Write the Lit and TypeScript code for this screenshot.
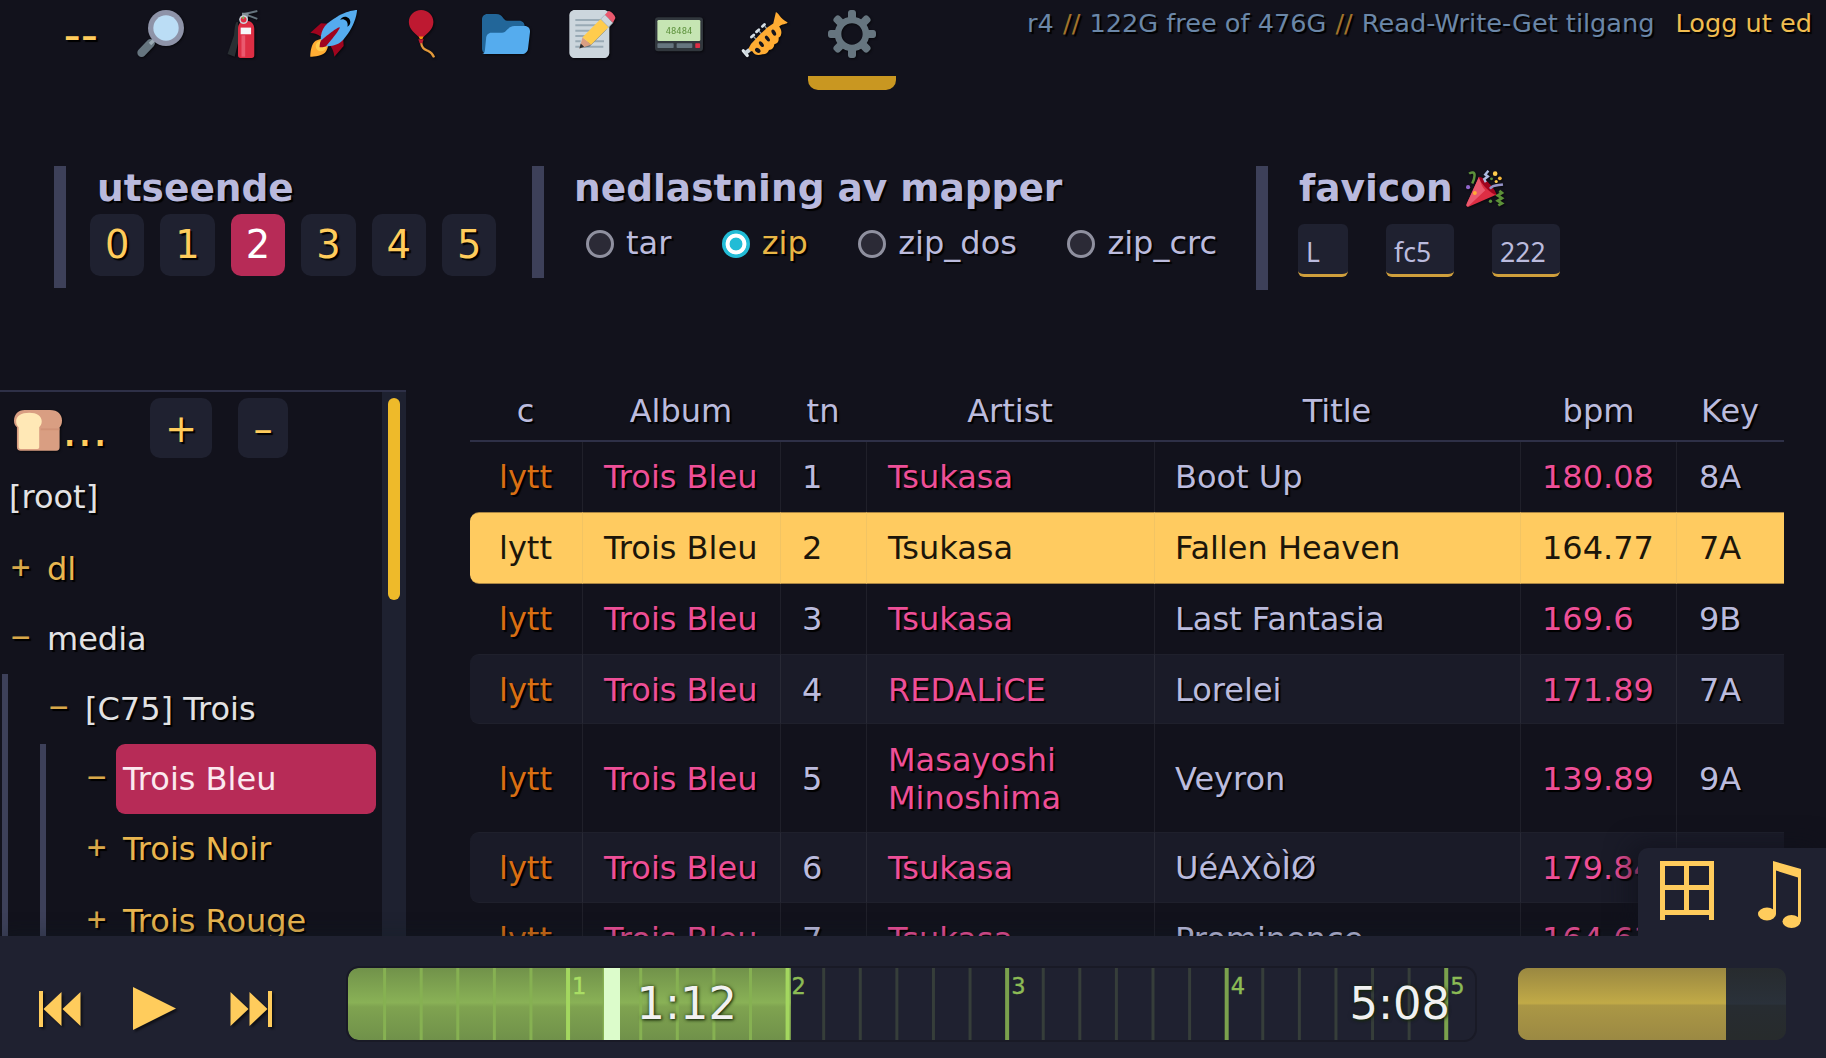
import { LitElement, html, css, svg } from "lit";
import { customElement } from "lit/decorators.js";
import { classMap } from "lit/directives/class-map.js";

const glass = svg`
  <path d="M4.2 32 11 25" stroke="#66757f" stroke-width="6.4" stroke-linecap="round"/>
  <path d="M10.5 25.500 14.500 21.500" stroke="#9aaab4" stroke-width="2.600"/>
  <circle cx="22.500" cy="13.500" r="13.500" fill="#8e93a8"/>
  <circle cx="22.500" cy="13.500" r="9.500" fill="#bbddf5"/>`;

const extinguisher = svg`
  <path d="M11 9c-1.500 2-1.500 6-2 10l-4.800 14 5.300 2 2.500-10V9z" fill="#292f33"/>
  <path d="M12 34V14c0-3.500 2-6 6-6s6.200 2.500 6.200 6v20c0 1.300-.7 2-2 2h-8.200c-1.300 0-2-.7-2-2z" fill="#dd2e44"/>
  <path d="M14.600 19h2.800v16h-2.800z" fill="#ea596e"/>
  <path d="M14 13.200h7.800v5H14z" fill="#f5f8fa"/>
  <path d="M15.500 3.400 26.500.8M18 3.500l8.500 3.200" stroke="#66757f" stroke-width="1.500" fill="none"/>
  <path d="M15 2h5l-1 6h-4z" fill="#808c95"/>
  <circle cx="16.200" cy="7.200" r="3.300" fill="#ccd6dd"/>
  <circle cx="16.200" cy="7.200" r="2.200" fill="#dd2e44"/>
  <circle cx="16" cy="5.800" r=".9" fill="#77b255"/>`;

const rocket = svg`
  <path fill="#a0041e" d="M1 17l8-7 16 1 1 16-7 8s.001-5.999-6-12-12-6-12-6z"/>
  <path fill="#ffac33" d="M.973 35s-.036-7.979 2.985-11S15 21.187 15 21.187 14.999 29 11.999 32c-3 3-11.026 3-11.026 3z"/>
  <circle fill="#ffcc4d" cx="9" cy="27" r="4"/>
  <path fill="#55acee" d="M35.999 0s-10 0-22 10c-6 5-6 14-4 16s11 2 16-4c10-12 10-22 10-22z"/>
  <path fill="#000" d="M26.999 5c-1.623 0-3.013.971-3.641 2.360.502-.227 1.055-.360 1.641-.360 2.209 0 4 1.791 4 4 0 .586-.133 1.139-.359 1.640 1.389-.627 2.359-2.017 2.359-3.640 0-2.209-1.791-4-4-4z"/>
  <path fill="#a0041e" d="M8 28s0-4 1-5 13.001-10.999 14-10-9.001 13-10.001 14S8 28 8 28z"/>`;

const balloon = svg`
  <path d="M19.500 24c.5 5 3 5.500 5.500 6.800 2.500 1.200 3.500 2.700 4.300 4.700" fill="none" stroke="#e39a3b" stroke-width="1.700"/>
  <path d="M17.500 22h4l-1 3h-2z" fill="#be1931"/>
  <path d="M28.800 9c0 5.500-4.500 8.500-8.300 12h-1.800C15 17.500 10.400 14.500 10.400 9c0-5 4.100-9 9.200-9s9.200 4 9.200 9z" fill="#be1931"/>
  <path d="M17.800 19.800h3.600l-.8 2h-2z" fill="#f4900c"/>`;

const folder = svg`
  <path fill="#226699" d="M0 29c0 2.209 1.791 4 4 4h24c2.209 0 4-1.791 4-4V12c0-2.209-1.791-4-4-4h-9c-3.562 0-3-5-8.438-5H4C1.791 3 0 4.791 0 7v22z"/>
  <path fill="#55acee" d="M32 12h-7.500c-5.400 0-5.900 5-9.500 5H7c-2.200 0-3.700 1.800-3.900 4l-.9 9c-.2 2-.8 3-2.200 3h30c2.400 0 4.100-1.600 4.500-4L36 16.500c.2-2.500-1.300-4.500-4-4.500z"/>`;

const memo = svg`
  <path fill="#ccd6dd" d="M31 32c0 2.209-1.791 4-4 4H5c-2.209 0-4-1.791-4-4V4c0-2.209 1.791-4 4-4h22c2.209 0 4 1.791 4 4v28z"/>
  <path d="M5.500 7.500h21M5.500 11.500h16M5.500 15.500h14M5.500 19.500h8M5.500 23.500h4M14 23.500h13M5.500 27.500h21" stroke="#99aab5" stroke-width="1.500"/>
  <path d="M31 13 34 9.500 16 27.500 9 28.500z" fill="#66757f"/>
  <path d="m8.600 28.800 2.300-8.300 6.500 5.500z" fill="#d99e82"/>
  <path d="m8.600 28.800.9-3.600 2.600 2.300z" fill="#292f33"/>
  <path d="M10.900 20.500 24.500 6.800l6 6L17.300 26z" fill="#ffcc4d"/>
  <path d="m24.500 6.800 3.200-3.200 6 6-3.200 3.200z" fill="#ccd6dd" stroke="#99aab5" stroke-width=".5"/>
  <path d="m27.700 3.600 2.400-2.700c1.200-1.200 6.300 3.900 5.300 5.500l-1.700 3.200z" fill="#ea596e"/>`;

const pager = svg`
  <rect x="0" y="5.500" width="36" height="25.500" rx="2.500" fill="#31373d"/>
  <rect x="1.800" y="7.500" width="32.200" height="15.800" rx="1" fill="#c6e5b3"/>
  <text x="18" y="17.700" text-anchor="middle" font-family="DejaVu Sans Mono" font-size="6.600" fill="#5c913b">48484</text>
  <rect x="1.800" y="25" width="12.200" height="3.500" rx=".5" fill="#66757f"/>
  <rect x="16.200" y="25" width="11.800" height="3.500" rx=".5" fill="#66757f"/>
  <rect x="30.200" y="25" width="3.600" height="3.500" rx=".5" fill="#dd2e44"/>`;

const trumpet = svg`
  <path d="m7.800 20.300 1.800-1.600M11.600 16.400l1.800-1.600M16 12.300l1.600-1.500" stroke="#d5dee4" stroke-width="2.100" stroke-linecap="round"/>
  <path d="m9.500 20 3 3M13.500 16l3 3M17.800 12.200l2.500 3" stroke="#8c99a3" stroke-width="1"/>
  <path d="M4.600 30.800 7.500 25.500 14 18.500 20 13l4.200-2.800L26.200 1.500c1.500.6 2.400 2.500 4 4.300s3.300 2.600 4.800 3.600c-.5 1.200-4.500 1.100-6.400 3 1.500 2 2.200 4 1.300 6.500-.2 1.300-1.700 1.800-1.700 1.800.4 3-.7 4.600-3.200 5-.2 2.600-1.500 4.200-4 4.300-1 2.300-2.500 3.300-4.800 3.200-3.400 1.200-6 .8-7.700-2.200z" fill="#ffac33"/>
  <g fill="#15151d">
    <ellipse cx="12.600" cy="30.300" rx="1.600" ry="2.300" transform="rotate(-50 12.600 30.300)"/>
    <ellipse cx="15.300" cy="25.600" rx="1.300" ry="2.500" transform="rotate(-38 15.300 25.600)"/>
    <ellipse cx="19.800" cy="21.400" rx="1.300" ry="2.500" transform="rotate(-38 19.800 21.400)"/>
    <ellipse cx="24.600" cy="17" rx="1.400" ry="2.500" transform="rotate(-30 24.600 17)"/>
  </g>
  <path d="m1.700 30.500 3 3.600" stroke="#e1e8ed" stroke-width="2.400" stroke-linecap="round"/>
  <path d="m3 32.500 3.400-2.600" stroke="#ccd6dd" stroke-width="3"/>`;

const gear = svg`
  <path fill="#66757f" d="M34 15h-3.362c-.324-1.369-.864-2.651-1.582-3.814l2.379-2.379c.781-.781.781-2.048 0-2.829l-1.414-1.414c-.781-.781-2.047-.781-2.828 0l-2.379 2.379C23.650 6.225 22.369 5.686 21 5.362V2c0-1.104-.896-2-2-2h-2c-1.104 0-2 .896-2 2v3.362c-1.369.324-2.651.864-3.814 1.582L8.808 4.565c-.781-.781-2.048-.781-2.828 0L4.565 5.979c-.781.781-.781 2.048-.001 2.829l2.379 2.379C6.225 12.350 5.686 13.632 5.362 15H2c-1.104 0-2 .896-2 2v2c0 1.104.896 2 2 2h3.362c.324 1.368.864 2.650 1.582 3.813l-2.379 2.379c-.780.780-.780 2.048.001 2.829l1.414 1.414c.780.780 2.047.780 2.828 0l2.379-2.379c1.163.719 2.445 1.258 3.814 1.582V34c0 1.104.896 2 2 2h2c1.104 0 2-.896 2-2v-3.362c1.368-.324 2.650-.864 3.813-1.582l2.379 2.379c.781.781 2.047.781 2.828 0l1.414-1.414c.781-.781.781-2.048 0-2.829l-2.379-2.379c.719-1.163 1.258-2.445 1.582-3.814H34c1.104 0 2-.896 2-2v-2C36 15.896 35.104 15 34 15zM18 26c-4.418 0-8-3.582-8-8s3.582-8 8-8 8 3.582 8 8-3.582 8-8 8z"/>`;

const bread = svg`
  <path d="M8 3h19c6 0 9 3.500 9 8 0 2.500-.8 3.800-1.800 5v15c0 1.700-.8 2.500-2.500 2.500H5c-1.800 0-2.800-.8-2.800-2.500V16C.8 14.500 0 13.500 0 11c0-4.500 3-8 8-8z" fill="#d99e82"/>
  <path d="M20 16.800h14.200v1.400H20z" fill="#c98a70" opacity=".6"/>
  <path d="M11.500 5c5.500 0 9.300 2.300 9.300 6.500 0 2.200-.8 3.300-1.900 4.500v14.800c0 .9-.4 1.400-1.300 1.400H4.900c-.9 0-1.400-.5-1.400-1.400V16C2.300 14.800 1.600 13.500 1.600 11.500 1.600 7.300 5.500 5 11.500 5z" fill="#ffe8b6"/>`;

const popper = svg`
  <path d="M12.500 6.500 29.500 23.500 3 35c-2 .8-3-.3-2.400-2.400z" fill="#dd2e44"/>
  <path d="M12.500 6.500c1.500 6 3 10 6 13L2 35c-1.300.3-2-.9-1.400-2.400z" fill="#ea596e"/>
  <path d="M12.500 7c3-2 16 11 16.500 16.500-2.500 1.500-15.500-10-16.500-16.500z" fill="#a0041e"/>
  <path d="M3 3.500c2.500-2 5.500-1.500 5.200 2C8 9 7.500 10 6 13" stroke="#5c913b" stroke-width="2.400" fill="none"/>
  <path d="M21.500.8l-3 3.500 2.500 2-3.500 2.500 1.500 3" stroke="#aebbe0" stroke-width="2.300" fill="none"/>
  <path d="M23 18c3-4 7-3 12.500-4" stroke="#9593c8" stroke-width="2.400" fill="none"/>
  <path d="M32 20l2.500 2-4 2.500 4 2.500-4 2.500 4 2.500-3.500 2" stroke="#5c9138" stroke-width="2.600" fill="none"/>
  <circle cx="28" cy="3.500" r="2.200" fill="#ffcc4d"/><circle cx="32.500" cy="8" r="1.800" fill="#f4b73c"/>
  <circle cx="29" cy="11" r="1.500" fill="#ffcc4d"/><circle cx="24.500" cy="8.500" r="1.400" fill="#5c913b"/>
  <circle cx="2" cy="16.500" r="2" fill="#9266cc"/><circle cx="8.500" cy="22" r="1.900" fill="#ffac33"/>
  <circle cx="23.500" cy="30" r="1.600" fill="#5c913b"/>`;

const icon = (art: unknown, cls = "") =>
  html`<svg class="emoji ${cls}" viewBox="0 0 36 36" fill="none" aria-hidden="true">${art}</svg>`;

const tabs = [glass, extinguisher, rocket, balloon, folder, memo, pager, trumpet, gear];

const rows = [
  ["lytt", "Trois Bleu", "1", "Tsukasa", "Boot Up", "180.08", "8A"],
  ["lytt", "Trois Bleu", "2", "Tsukasa", "Fallen Heaven", "164.77", "7A"],
  ["lytt", "Trois Bleu", "3", "Tsukasa", "Last Fantasia", "169.6", "9B"],
  ["lytt", "Trois Bleu", "4", "REDALiCE", "Lorelei", "171.89", "7A"],
  ["lytt", "Trois Bleu", "5", "Masayoshi Minoshima", "Veyron", "139.89", "9A"],
  ["lytt", "Trois Bleu", "6", "Tsukasa", "UéAXòÌØ", "179.84", "7A"],
  ["lytt", "Trois Bleu", "7", "Tsukasa", "Prominence", "164.63", "8A"],
];

const WIDTH = 1127;
const MINUTE = WIDTH / (308 / 60);

@customElement("app-root")
export class AppRoot extends LitElement {
  static styles = css`
    :host {
      display: block;
      --bg: #12121c;
      --raised: #1f2130;
      --fg: #bbbbdd;
      --accent: #ffcc5c;
      --line: #2e3047;
      --bar: #3d4059;
      --pink: #b72b57;
    }
    *, *::before, *::after { box-sizing: border-box; }
    .page {
      position: relative;
      display: flex;
      flex-direction: column;
      width: 1826px;
      height: 1058px;
      overflow: hidden;
      background: var(--bg);
      color: var(--fg);
      font: 32px/37px "DejaVu Sans", sans-serif;
      text-shadow: 2px 2px 1px #000;
    }
    .emoji { width: 48px; height: 48px; display: block; flex: none; filter: drop-shadow(1.5px 1.5px 1px #0009); overflow: visible; }
    .emoji text { text-shadow: none; }

    .top { display: flex; justify-content: space-between; height: 166px; flex: none; padding-right: 14px; }
    .tabs { display: flex; padding-left: 43px; }
    .tab { width: 86.5px; height: 90px; padding-top: 10px; display: flex; justify-content: center; position: relative; color: var(--accent); }
    .tab.text { width: 73.7px; padding: 6px 0 0 2px; font-size: 48px; line-height: 56px; }
    .tab.on::after { content: ""; position: absolute; left: -1px; right: -1px; bottom: 0; height: 14px; background: #c99721; border-radius: 0 0 10px 10px; }
    .info { display: flex; gap: 21px; font-size: 25.6px; line-height: 30px; padding-top: 8px; color: #6b87a8; white-space: pre; }
    .info i { font-style: normal; color: #a2742a; padding: 0 1px; }
    .info b { font-weight: 400; color: #f0bd50; }

    .settings { display: flex; align-items: flex-start; height: 224px; flex: none; padding-left: 54px; }
    .panel { border-left: 12px solid var(--bar); }
    .panel h3 { margin: 0; display: flex; align-items: center; font-size: 37.5px; line-height: 45px; height: 45px; color: #b9b9dd; white-space: nowrap; }
    .looks { width: 478px; height: 122px; padding-left: 24px; }
    .looks h3 { padding-left: 7px; }
    .zips { width: 724px; height: 112px; padding-left: 30px; }
    .favicon { height: 124px; padding-left: 30px; }
    .favicon h3 { padding-left: 1px; }
    .btns { display: flex; gap: 16px; padding-top: 3px; }
    .btn { width: 54.4px; height: 62px; border-radius: 10px; background: var(--raised); color: var(--accent); font-size: 38.4px; line-height: 62px; text-align: center; }
    .btn.on { background: var(--pink); color: #fff; text-shadow: none; }
    .radios { display: flex; padding: 14px 0 0 12px; }
    .radio { display: flex; align-items: center; gap: 12px; height: 37px; margin-right: 50.500px; }
    .radio::before { content: ""; width: 28px; height: 28px; border-radius: 50%; background: #2b2a36; border: 3px solid #8f909f; }
    .radio.on { color: #e9b646; }
    .radio.on::before { background: radial-gradient(circle, #22bcd6 0 6px, #fff 6.800px 10px, #22bcd6 10.800px); border: 0; }
    .emoji.small { width: 37.5px; height: 37.5px; margin-left: 13.5px; }
    .inputs { display: flex; gap: 38px; padding-top: 13px; text-shadow: none; }
    .input { width: 68px; height: 53px; padding: 5px 0 0 8px; background: var(--raised); border-bottom: 3px solid #cf9f3c; border-radius: 6px; font: 26.600px/46px "Noto Sans", sans-serif; }
    .input.short { width: 50px; }

    .main { display: flex; flex: 1; min-height: 0; }
    .tree { width: 406px; flex: none; display: flex; overflow: hidden; border-top: 2px solid var(--line); }
    .nodes { flex: 1; color: #e9b650; min-width: 0; }
    .crumbs { display: flex; height: 70px; padding: 6px 0 0 14px; color: var(--accent); }
    .crumbs .emoji { margin-top: 8px; }
    .dots { width: 88px; font-size: 48px; line-height: 62px; }
    .crumbs .btn { width: 62px; height: 60px; line-height: 62px; margin-right: 26px; }
    .crumbs .btn.narrow { width: 50px; }
    .node { display: flex; height: 70px; line-height: 71px; padding-left: 11px; white-space: nowrap; }
    .node.root { padding-left: 9px; margin-bottom: 2px; }
    .node.low { height: 72px; line-height: 74px; }
    .mark { width: 30px; line-height: 67px; font-family: "DejaVu Sans Mono", monospace; color: #d9a84a; }
    .low .mark { line-height: 70px; }
    .name { flex: 1; padding-left: 6px; }
    .open { color: #e2e2e4; }
    .name.here { background: var(--pink); border-radius: 9px; color: #fbe9ef; text-shadow: none; margin-right: 6px; }
    .kids { border-left: 6px solid var(--bar); margin-left: 2px; }
    .kids .node { padding-left: 41px; }
    .kids .kids { margin-left: 32px; }
    .kids .kids .mark { padding-left: 1px; }
    .kids .kids .name { padding-left: 7px; }
    .kids .kids .node { padding-left: 40px; }
    .track { width: 24px; background: #1e2130; padding: 6px 6px 0; flex: none; }
    .thumb { height: 202px; border-radius: 6px; background: #eeba2a; }

    .files { width: 1314px; margin-left: 64px; }
    .row { display: grid; grid-template-columns: 113px 198px 86px 288px 366px 156px 107px; height: 70px; }
    .head { height: 52px; border-bottom: 2px solid var(--line); text-align: center; line-height: 43px; }
    .head span { padding-right: 2px; }
    .head span:nth-child(n + 6) { padding-right: 1px; }
    .cell { display: flex; align-items: center; padding-left: 21px; border-right: 1px solid #ffffff10; line-height: 38px; }
    .cell:first-child { padding-left: 29px; border-radius: 9px 0 0 9px; color: #d96f14; }
    .cell:last-child { border-right: 0; padding-left: 22px; }
    .cell.c1, .cell.c3, .cell.c5 { color: #ee4f97; }
    .cell.c3 { padding-right: 70px; }
    .cell.c4 { padding-left: 20px; }
    .row.alt .cell { padding-top: 1px; background: #1a1b28; border-top: 1px solid #1f202c; border-bottom: 1px solid #1f202c; }
    .row.play { height: 72px; text-shadow: none; }
    .row.play .cell { background: #ffcb60; color: #1c160a; border-top: 1px solid #a98544; border-bottom: 1px solid #a98544; border-right-color: #e6bd6580; }
    .row.play .cell:last-child { border-right: 0; }
    .row.tall { height: 108px; }
    .row.tall .cell { padding-top: 2px; }
    .row.late { height: 71px; }

    .player { position: relative; display: flex; height: 122px; flex: none; padding: 32px 0 0 39px; background: var(--raised); box-shadow: 0 0 20px #0f1d2570; }
    .keys { display: flex; width: 309px; height: 73px; padding-top: 8px; align-items: center; }
    .keys svg { display: block; overflow: visible; filter: drop-shadow(2px 2px 1px #0008); }
    .prev { margin-right: 52px; }
    .go { margin-right: 54px; }
    .time { display: block; border-radius: 11px; box-shadow: 0 0 0 2px #191a26; }
    .time text { font-family: "DejaVu Sans", sans-serif; text-shadow: none; }
    .time .clock { font-size: 44.800px; fill: #f1f1f1; text-shadow: 1px 1px 3px #142608, 0 0 4px #14260899; }
    .time .num { font-size: 22.500px; fill: #8cbb55; stroke: #8cbb55; stroke-width: .4px; }
    .time .num.lit { fill: #a9de64; stroke: #a9de64; }
    .volume { width: 268px; height: 72px; margin-left: 43px; border-radius: 10px; overflow: hidden; background: linear-gradient(#272b2e, #2a313a 50%, #272c31 52%, #272b2c); }
    .level { width: 208px; height: 100%; background: linear-gradient(#9a8841, #c1aa47 49%, #ab9745 52%, #9b8943); }
    .corner { position: absolute; right: 0; bottom: 122px; width: 188px; height: 88px; border-radius: 10px 0 0 0; background: var(--raised); box-shadow: -8px -4px 24px #10121cb0; clip-path: inset(-40px 0 0 -40px); }
    .corner svg { display: block; overflow: visible; }
  `;

  private tick(second: number) {
    const major = second % 60 === 0;
    const x = (second / 60) * MINUTE;
    const played = x < 442;
    const colour = major ? (played ? "#a3d75f" : "#7ba24d") : played ? "#86b152" : "#363e3a";
    return svg`<rect x=${x - 1.500} y="0" width=${major ? 4 : 3} height="72" fill=${colour}></rect>
      ${major ? svg`<text class=${second === 60 ? "num lit" : "num"} x=${x + 4.500} y="25.500">${second / 60}</text>` : ""}`;
  }

  private node(mark: string, name: string, cls = "", low = false) {
    return html`<div class=${classMap({ node: true, low })}>
      <span class="mark">${mark}</span><span class="name ${cls}">${name}</span>
    </div>`;
  }

  render() {
    const ticks = Array.from({ length: 30 }, (_, i) => (i + 1) * 10);
    return html`<div class="page">
      <header class="top">
        <nav class="tabs">
          <div class="tab text">--</div>
          ${tabs.map((t, i) => html`<div class=${classMap({ tab: true, on: i === 8 })}>${icon(t)}</div>`)}
        </nav>
        <div class="info"><span>r4 <i>//</i> 122G free of 476G <i>//</i> Read-Write-Get tilgang</span><b>Logg ut ed</b></div>
      </header>
      <section class="settings">
        <div class="panel looks">
          <h3>utseende</h3>
          <div class="btns">${[0, 1, 2, 3, 4, 5].map((n) => html`<div class=${classMap({ btn: true, on: n === 2 })}>${n}</div>`)}</div>
        </div>
        <div class="panel zips">
          <h3>nedlastning av mapper</h3>
          <div class="radios">${["tar", "zip", "zip_dos", "zip_crc"].map((n) => html`<div class=${classMap({ radio: true, on: n === "zip" })}>${n}</div>`)}</div>
        </div>
        <div class="panel favicon">
          <h3>favicon ${icon(popper, "small")}</h3>
          <div class="inputs"><div class="input short">L</div><div class="input">fc5</div><div class="input">222</div></div>
        </div>
      </section>
      <main class="main">
        <aside class="tree">
          <div class="nodes">
            <div class="crumbs">${icon(bread)}<span class="dots">...</span><div class="btn">+</div><div class="btn narrow">–</div></div>
            <div class="node root open">[root]</div>
            ${this.node("+", "dl")}
            ${this.node("−", "media", "open")}
            <div class="kids">
              ${this.node("−", "[C75] Trois", "open")}
              <div class="kids">
                ${this.node("−", "Trois Bleu", "here")}
                ${this.node("+", "Trois Noir")}
                ${this.node("+", "Trois Rouge", "", true)}
              </div>
            </div>
          </div>
          <div class="track"><div class="thumb"></div></div>
        </aside>
        <div class="files">
          <div class="row head">${["c", "Album", "tn", "Artist", "Title", "bpm", "Key"].map((h) => html`<span>${h}</span>`)}</div>
          ${rows.map((r, i) => html`<div class=${classMap({ row: true, play: i === 1, alt: i === 3 || i === 5, tall: i === 4, late: i > 4 })}>
            ${r.map((c, j) => html`<div class="cell c${j}">${c}</div>`)}
          </div>`)}
        </div>
      </main>
      <footer class="player">
        <div class="keys">
          <svg class="prev" width="42" height="36" viewBox="0 0 42 36" fill="#ffcc5c"><path d="M0 0h4v36H0zM22.500 1v34L4.500 18zM41.500 1v34L23.500 18z"/></svg>
          <svg class="go" width="43" height="43" viewBox="0 0 43 43" fill="#ffcc5c"><path d="M0 0v43l43-21.500z"/></svg>
          <svg class="next" width="42" height="36" viewBox="0 0 42 36" fill="#ffcc5c"><path d="M38 0h4v36h-4zM.5 1v34l18-17zM19.500 1v34l18-17z"/></svg>
        </div>
        <svg class="time" width=${WIDTH} height="72" viewBox="0 0 1127 72">
          <defs><linearGradient id="g" x1="0" y1="0" x2="0" y2="1">
            <stop offset="0" stop-color="#71924a"/><stop offset=".48" stop-color="#89b156"/>
            <stop offset=".54" stop-color="#7fa350"/><stop offset="1" stop-color="#70914a"/>
          </linearGradient></defs>
          <path d="M10 0H443V72H10A10 10 0 0 1 0 62V10A10 10 0 0 1 10 0z" fill="url(#g)"/>
          ${ticks.map((t) => this.tick(t))}
          <rect x="256" y="0" width="16" height="72" fill="#dcfccb"/>
          <text class="clock" x="288.500" y="51">1:12</text>
          <text class="clock" x="1001.500" y="51">5:08</text>
        </svg>
        <div class="volume"><div class="level"></div></div>
      </footer>
      <div class="corner">
        <svg width="188" height="88" viewBox="0 0 188 88" fill="#ffcc5c">
          <path d="M22 13h54v59h-5v-5H27v5h-5zM27 18v19h19V18zM51 18v19h20V18zM27 42v20h19V42zM51 42v20h20V42z" fill-rule="evenodd"/>
          <path d="M135 13 163 21V73.500h-3V29.500L138 22.500V66h-3z"/>
          <ellipse cx="129" cy="66" rx="9" ry="6.500"/><ellipse cx="153.500" cy="73.500" rx="9" ry="6.500"/>
        </svg>
      </div>
    </div>`;
  }
}
